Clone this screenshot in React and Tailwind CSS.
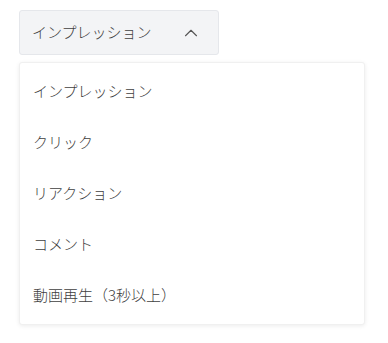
import { ChevronUp } from "lucide-react";

const options = ["インプレッション", "クリック", "リアクション", "コメント", "動画再生（3秒以上）"];

const App = () => {
  return (
    <div
      className="w-[388px] h-[343px] bg-white pt-[10px] pl-[19px]"
      style={{ fontFamily: '"Noto Sans CJK JP", "Noto Sans", sans-serif' }}
    >
      <button className="flex items-center w-[200px] h-[45px] pl-[12px] pr-[16px] bg-[#f3f4f6] border border-[#e5e7eb] rounded-[3px] text-[15px] font-light text-[#404040]">
        <span>インプレッション</span>
        <ChevronUp className="ml-auto text-[#555]" size={22} strokeWidth={1.2} />
      </button>
      <ul className="mt-[7px] w-[346px] py-[3px] bg-white rounded-[3px] border border-[#f0f0f0] shadow-[0_1px_4px_rgba(0,0,0,0.08)]">
        {options.map((o) => (
          <li key={o} className="h-[51px] flex items-center pl-[13px] text-[15px] font-light text-[#404040]">
            {o}
          </li>
        ))}
      </ul>
    </div>
  );
};

export default App;
